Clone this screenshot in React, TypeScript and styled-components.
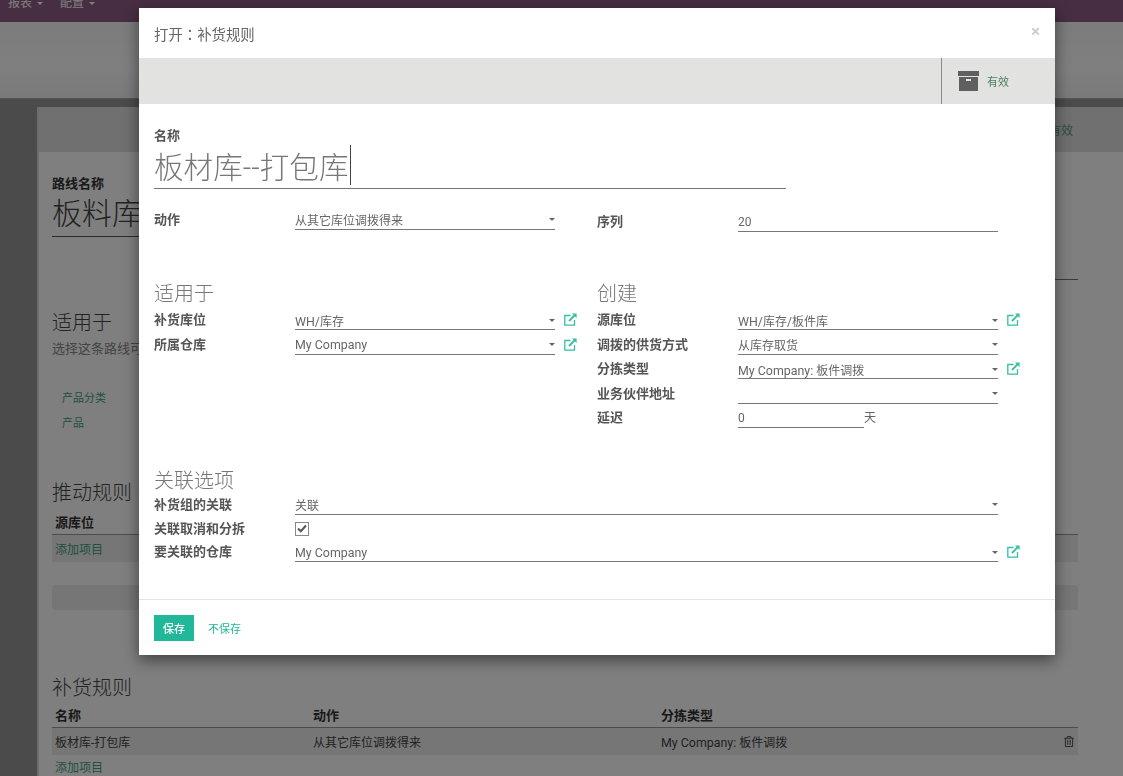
import React from "react";
import styled, { createGlobalStyle } from "styled-components";
import { FaRegTrashAlt } from "react-icons/fa";

const GlobalStyle = createGlobalStyle`
  html, body {
    margin: 0;
    padding: 0;
    height: 100%;
    overflow: hidden;
    background: #969696;
    font-family: Roboto, "Noto Sans CJK SC", sans-serif;
    color: #4c4c4c;
  }
`;

const GREEN = "#21b799";

/* page behind the dialog */
const Page = styled.div`
  height: 776px;
  overflow: hidden;
  display: flex;
  flex-direction: column;
`;

const TopBar = styled.div`
  height: 22px;
  flex: none;
  background: #8f5c86;
  display: flex;
  gap: 17px;
  padding-left: 8px;
  color: #fff;
  font-size: 12px;
  line-height: 6px;
  overflow: hidden;
  align-items: flex-start;
`;

const TopItem = styled.span`
  display: inline-flex;
  align-items: center;
  gap: 5px;
  &::after {
    content: "";
    border: 3.5px solid transparent;
    border-top-color: #fff;
    border-bottom: 0;
  }
`;

const ControlPanel = styled.div`
  height: 77px;
  flex: none;
  background: linear-gradient(#f8f8f8, #ffffff 60%, #f4f4f4);
  border-bottom: 1px solid #a8a8a8;
  box-sizing: border-box;
`;

const Main = styled.div`
  flex: 1;
  background: #969696;
  padding: 8px 0 0 37px;
  display: flex;
`;

const Sheet = styled.div`
  flex: 1;
  background: #ffffff;
  border-left: 2px solid #d8d8d8;
`;

const SheetStatus = styled.div`
  height: 45px;
  background: #e0e0e0;
  display: flex;
  align-items: center;
  justify-content: flex-end;
  padding-right: 50px;
  font-size: 12px;
  color: #5b9a7a;
`;

const SheetBody = styled.div`
  padding: 24px 45px 0 13px;
`;

const SheetLabel = styled.div`
  font-size: 13px;
  font-weight: 700;
  line-height: 16px;
  color: #333;
`;

const SheetName = styled.div`
  font-size: 30px;
  line-height: 44px;
  width: 700px;
  height: 44px;
  border-bottom: 1px solid #555;
  color: #444;
  font-weight: 300;
`;

const SheetRule = styled.div`
  height: 42px;
  border-bottom: 1px solid #777;
  margin-left: 800px;
`;

const SheetHeading = styled.div<{ $top: number }>`
  font-size: 20px;
  line-height: 26px;
  margin-top: ${(p) => p.$top}px;
  color: #444;
  font-weight: 300;
`;

const SheetHelp = styled.div`
  font-size: 13px;
  line-height: 18px;
  margin-top: 4px;
  color: #888;
`;

const LinkList = styled.div`
  display: flex;
  flex-direction: column;
  gap: 9px;
  margin: 33px 0 0 10px;
  font-size: 11px;
  line-height: 16px;
  color: #3fa37a;
`;

const Table = styled.div<{ $top: number }>`
  margin-top: ${(p) => p.$top}px;
  font-size: 13px;
`;

const TableHead = styled.div`
  display: grid;
  grid-template-columns: 258px 348px 1fr;
  padding: 0 3px;
  height: 26px;
  align-items: center;
  font-weight: 700;
  color: #333;
  border-bottom: 1px solid #999;
`;

const TableRow = styled.div`
  display: grid;
  grid-template-columns: 258px 348px 1fr 14px;
  padding: 0 4px 0 3px;
  height: 27px;
  align-items: center;
  font-size: 12px;
  color: #444;
  background: #ececec;
`;

const RowLink = styled.span`
  color: #3fa37a;
`;

const TrashIcon = styled(FaRegTrashAlt)`
  justify-self: end;
  width: 10px;
  height: 11px;
  color: #555;
`;

const AddLink = styled.div`
  color: #3fa37a;
  font-size: 12px;
  padding-left: 3px;
  line-height: 26px;
`;

const GreyBar = styled.div`
  height: 25px;
  margin-top: 23px;
  background: #ececec;
  border-radius: 3px;
`;

const Backdrop = styled.div`
  position: fixed;
  inset: 0;
  background: rgba(0, 0, 0, 0.5);
`;

/* dialog */
const Dialog = styled.div`
  position: fixed;
  left: 139px;
  top: 8px;
  width: 916px;
  height: 647px;
  background: #fff;
  box-shadow: 0 5px 15px rgba(0, 0, 0, 0.5);
  display: flex;
  flex-direction: column;
`;

const DialogHeader = styled.div`
  height: 50px;
  flex: none;
  display: flex;
  align-items: center;
  justify-content: space-between;
  padding: 0 15px;
  font-family: Roboto, "Noto Sans CJK TC", sans-serif;
  font-size: 14.4px;
  color: #666;
`;

const Close = styled.span`
  font-size: 17px;
  font-weight: 700;
  color: #cfcfcf;
  line-height: 1;
  margin-top: -4px;
`;

const ButtonBar = styled.div`
  height: 46px;
  flex: none;
  background: #e2e2e0;
  display: flex;
  justify-content: flex-end;
`;

const StatButton = styled.div`
  width: 114px;
  border-left: 1px solid #8a8a8a;
  display: flex;
  align-items: center;
  gap: 8px;
  padding-left: 16px;
  box-sizing: border-box;
  font-size: 11px;
  color: #4f7f62;
`;

const DialogBody = styled.div`
  flex: 1;
  padding: 24px 15px 0;
`;

const NameLabel = styled.div`
  font-size: 13px;
  font-weight: 700;
  line-height: 16px;
  color: #555;
`;

const NameInput = styled.div`
  width: 632px;
  height: 44px;
  line-height: 48px;
  border-bottom: 1px solid #777;
  font-size: 29.6px;
  color: #777;
  font-weight: 300;
  white-space: nowrap;
`;

const Caret = styled.span`
  display: inline-block;
  width: 1px;
  height: 40px;
  background: #444;
  vertical-align: top;
  margin: 1px 0 0 1px;
`;

const Columns = styled.div`
  display: grid;
  grid-template-columns: 443px 1fr;
`;

const SectionTitle = styled.div<{ $top: number; $bottom?: number }>`
  font-size: 20px;
  line-height: 23px;
  font-weight: 300;
  color: #777;
  margin-top: ${(p) => p.$top}px;
  margin-bottom: ${(p) => p.$bottom ?? 0}px;
`;

const Label = styled.div`
  font-size: 13px;
  font-weight: 700;
  color: #555;
  line-height: 20px;
  white-space: nowrap;
`;

const Row = styled.div<{ $wide?: boolean; $top?: number }>`
  display: grid;
  grid-template-columns: ${(p) => (p.$wide ? "141px 703px 22px" : "141px 260px 22px")};
  height: ${(p) => (p.$wide ? "23.8px" : "24.5px")};
  margin-top: ${(p) => p.$top ?? 0}px;
  align-items: end;

  ${Label} {
    line-height: ${(p) => (p.$wide ? "20px" : "20px")};
  }
`;

const Field = styled.div`
  height: 19px;
  display: flex;
  align-items: center;
  justify-content: space-between;
  border-bottom: 1px solid #777;
  font-size: 12px;
  color: #666;
  box-sizing: border-box;
  white-space: nowrap;
`;

const Latin = styled.span`
  font-size: 12.4px;
`;

const SelectArrow = styled.span`
  width: 0;
  height: 0;
  border: 3.5px solid transparent;
  border-top-color: #666;
  border-bottom: 0;
`;

const ExternalLink = styled.svg`
  width: 13px;
  height: 13px;
  margin: 0 0 4px 9px;
  fill: none;
  stroke: #35bfa3;
  stroke-width: 1.3;
`;

const ShortField = styled(Field)`
  width: 126px;
`;

const Unit = styled.span`
  font-size: 12px;
  color: #666;
  line-height: 20px;
`;

const DelayCell = styled.div`
  display: flex;
  align-items: flex-end;
`;

const CheckBox = styled.div`
  width: 14px;
  height: 14px;
  margin-bottom: 3px;
  border: 1px solid #888;
  box-sizing: border-box;
  display: flex;
  align-items: center;
  justify-content: center;
`;

const DialogFooter = styled.div`
  height: 56px;
  flex: none;
  box-sizing: border-box;
  border-top: 1px solid #e5e5e5;
  display: flex;
  align-items: center;
  gap: 14px;
  padding: 1px 15px 0;
`;

const SaveButton = styled.button`
  width: 40px;
  height: 26px;
  padding: 0;
  border: 0;
  background: ${GREEN};
  color: #fff;
  font-family: inherit;
  font-size: 11px;
  font-weight: 500;
`;

const DiscardLink = styled.span`
  font-size: 11px;
  color: ${GREEN};
`;

const ExtIcon = () => (
  <ExternalLink viewBox="0 0 13 13">
    <path d="M6.5 2.5H.8v9.7h9.7V7" />
    <path d="M5 8 11 2" strokeWidth="1.8" />
    <path d="M8 .5h4.6v4.6z" fill="#35bfa3" stroke="none" />
  </ExternalLink>
);

const Select: React.FC<{ children?: React.ReactNode }> = ({ children }) => (
  <Field>
    <span>{children}</span>
    <SelectArrow />
  </Field>
);

const App: React.FC = () => (
  <>
    <GlobalStyle />
    <Page>
      <TopBar>
        <TopItem>报表</TopItem>
        <TopItem>配置</TopItem>
      </TopBar>
      <ControlPanel />
      <Main>
        <Sheet>
          <SheetStatus>有效</SheetStatus>
          <SheetBody>
            <SheetLabel>路线名称</SheetLabel>
            <SheetName>板料库</SheetName>
            <SheetRule />
            <SheetHeading $top={30}>适用于</SheetHeading>
            <SheetHelp>选择这条路线可以应用的位置</SheetHelp>
            <LinkList>
              <span>产品分类</span>
              <span>产品</span>
            </LinkList>
            <SheetHeading $top={48}>推动规则</SheetHeading>
            <Table $top={2}>
              <TableHead>
                <span>源库位</span>
              </TableHead>
              <TableRow>
                <RowLink>添加项目</RowLink>
              </TableRow>
            </Table>
            <GreyBar />
            <SheetHeading $top={65}>补货规则</SheetHeading>
            <Table $top={0}>
              <TableHead>
                <span>名称</span>
                <span>动作</span>
                <span>分拣类型</span>
              </TableHead>
              <TableRow>
                <span>板材库-打包库</span>
                <span>从其它库位调拨得来</span>
                <span>
                  <Latin>My Company:</Latin> 板件调拨
                </span>
                <TrashIcon />
              </TableRow>
              <AddLink>添加项目</AddLink>
            </Table>
          </SheetBody>
        </Sheet>
      </Main>
    </Page>
    <Backdrop />
    <Dialog>
      <DialogHeader>
        <span>打开：补货规则</span>
        <Close>×</Close>
      </DialogHeader>
      <ButtonBar>
        <StatButton>
          <svg width="21" height="20" viewBox="0 0 21 20">
            <rect x="0" y="0" width="21" height="5" fill="#5f5f5f" />
            <rect x="1" y="6" width="19" height="14" fill="#5f5f5f" />
            <rect x="8" y="8" width="5" height="2" fill="#e2e2e0" />
          </svg>
          <span>有效</span>
        </StatButton>
      </ButtonBar>
      <DialogBody>
        <NameLabel>名称</NameLabel>
        <NameInput>
          板材库--打包库
          <Caret />
        </NameInput>
        <Columns>
          <Row $top={16}>
            <Label>动作</Label>
            <Select>从其它库位调拨得来</Select>
          </Row>
          <Row $top={18}>
            <Label>序列</Label>
            <Field>20</Field>
          </Row>
          <div>
            <SectionTitle $top={51}>适用于</SectionTitle>
            <Row>
              <Label>补货库位</Label>
              <Select>
                <Latin>WH/</Latin>库存
              </Select>
              <ExtIcon />
            </Row>
            <Row>
              <Label>所属仓库</Label>
              <Select>
                <Latin>My Company</Latin>
              </Select>
              <ExtIcon />
            </Row>
          </div>
          <div>
            <SectionTitle $top={51}>创建</SectionTitle>
            <Row>
              <Label>源库位</Label>
              <Select>
                <Latin>WH/</Latin>库存/板件库
              </Select>
              <ExtIcon />
            </Row>
            <Row>
              <Label>调拨的供货方式</Label>
              <Select>从库存取货</Select>
            </Row>
            <Row>
              <Label>分拣类型</Label>
              <Select>
                <Latin>My Company:</Latin> 板件调拨
              </Select>
              <ExtIcon />
            </Row>
            <Row>
              <Label>业务伙伴地址</Label>
              <Select />
            </Row>
            <Row>
              <Label>延迟</Label>
              <DelayCell>
                <ShortField>0</ShortField>
                <Unit>天</Unit>
              </DelayCell>
            </Row>
          </div>
        </Columns>
        <SectionTitle $top={42} $bottom={-2}>
          关联选项
        </SectionTitle>
        <Row $wide>
          <Label>补货组的关联</Label>
          <Select>关联</Select>
        </Row>
        <Row $wide>
          <Label>关联取消和分拆</Label>
          <CheckBox>
            <svg width="10" height="9" viewBox="0 0 10 9">
              <path d="M1 4.5 3.8 7.2 9 1.5" fill="none" stroke="#555" strokeWidth="2" />
            </svg>
          </CheckBox>
        </Row>
        <Row $wide>
          <Label>要关联的仓库</Label>
          <Select>
            <Latin>My Company</Latin>
          </Select>
          <ExtIcon />
        </Row>
      </DialogBody>
      <DialogFooter>
        <SaveButton>保存</SaveButton>
        <DiscardLink>不保存</DiscardLink>
      </DialogFooter>
    </Dialog>
  </>
);

export default App;
